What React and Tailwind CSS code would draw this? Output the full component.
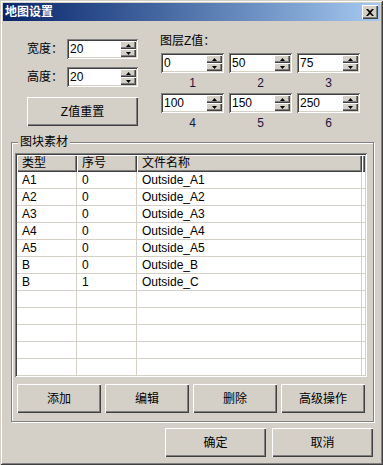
import React from 'react';

const sunken = 'shadow-[inset_1px_1px_0_#808080,inset_-1px_-1px_0_#ffffff,inset_2px_2px_0_#404040,inset_-2px_-2px_0_#d4d0c8]';
const raised = 'shadow-[inset_1px_1px_0_#ffffff,inset_-1px_-1px_0_#404040,inset_-2px_-2px_0_#808080]';
const font = "font-['Liberation_Sans','Noto_Sans_CJK_SC',sans-serif]";

const rows = [
    ['A1', '0', 'Outside_A1'],
    ['A2', '0', 'Outside_A2'],
    ['A3', '0', 'Outside_A3'],
    ['A4', '0', 'Outside_A4'],
    ['A5', '0', 'Outside_A5'],
    ['B', '0', 'Outside_B'],
    ['B', '1', 'Outside_C'],
    ['', '', ''],
    ['', '', ''],
    ['', '', ''],
    ['', '', ''],
    ['', '', ''],
    ['', '', ''],
];

const SpinBtn = ({ up }) => (
    <div className={`h-[8px] bg-[#d4d0c8] flex items-center justify-center ${raised}`}>
        <svg width="5" height="3" viewBox="0 0 5 3">
            {up ? <polygon points="0,3 5,3 2.5,0" fill="#000" /> : <polygon points="0,0 5,0 2.5,3" fill="#000" />}
        </svg>
    </div>
);

const Spin = ({ value, w }) => (
    <div className={`flex items-center bg-white h-[20px] p-[2px] ${sunken} ${w}`}>
        <span className="flex-1 pl-[1px] leading-[16px] text-black">{value}</span>
        <div className="flex flex-col w-[16px] h-[16px]">
            <SpinBtn up />
            <SpinBtn />
        </div>
    </div>
);

const Button = ({ children, w }) => (
    <button className={`h-[29px] bg-[#d4d0c8] text-black leading-none ${raised} ${w}`}>{children}</button>
);

const App = () => {
    return (
        <div className={`w-[383px] h-[465px] bg-[#d4d0c8] p-[3px] text-[12px] text-black ${font} shadow-[inset_1px_1px_0_#d4d0c8,inset_-1px_-1px_0_#404040,inset_2px_2px_0_#ffffff,inset_-2px_-2px_0_#808080]`}>
            {/* title bar */}
            <div className="h-[18px] flex items-center justify-between pl-[2px] pr-[2px] bg-gradient-to-r from-[#0a246a] to-[#a6caf0]">
                <span className="text-white font-bold text-[12px] leading-[18px]">地图设置</span>
                <div className={`w-[16px] h-[14px] bg-[#d4d0c8] flex items-center justify-center ${raised}`}>
                    <svg width="8" height="7" viewBox="0 0 8 7">
                        <path d="M0,0 L2,0 L4,2 L6,0 L8,0 L5,3.5 L8,7 L6,7 L4,5 L2,7 L0,7 L3,3.5 Z" fill="#000" />
                    </svg>
                </div>
            </div>

            {/* top settings */}
            <div className="flex pl-[24px]">
                <div className="mt-[18px]">
                    <div className="flex items-center h-[20px]">
                        <span className="w-[40px]">宽度：</span>
                        <Spin value="20" w="w-[71px]" />
                    </div>
                    <div className="flex items-center h-[20px] mt-[8px]">
                        <span className="w-[40px]">高度：</span>
                        <Spin value="20" w="w-[71px]" />
                    </div>
                    <Button w="w-[111px] h-[25px] mt-[10px]">Z值重置</Button>
                </div>
                <div className="ml-[22px] mt-[13px]">
                    <div className="h-[14px] leading-[14px]">图层Z值：</div>
                    <div className="grid grid-cols-3 gap-x-[5px] mt-[5px] pl-[1px]">
                        <Spin value="0" w="w-[63px]" />
                        <Spin value="50" w="w-[63px]" />
                        <Spin value="75" w="w-[63px]" />
                        <div className="h-[20px] leading-[20px] text-center text-[#1c1440]">1</div>
                        <div className="h-[20px] leading-[20px] text-center text-[#1c1440]">2</div>
                        <div className="h-[20px] leading-[20px] text-center text-[#1c1440]">3</div>
                        <Spin value="100" w="w-[63px]" />
                        <Spin value="150" w="w-[63px]" />
                        <Spin value="250" w="w-[63px]" />
                        <div className="h-[20px] leading-[20px] text-center text-[#1c1440]">4</div>
                        <div className="h-[20px] leading-[20px] text-center text-[#1c1440]">5</div>
                        <div className="h-[20px] leading-[20px] text-center text-[#1c1440]">6</div>
                    </div>
                </div>
            </div>

            {/* group box */}
            <div className="relative mt-[9px] ml-[8px] w-[363px] h-[280px] border border-[#808080] shadow-[inset_1px_1px_0_#ffffff,1px_1px_0_#ffffff] pl-[3px] pt-[10px]">
                <span className="absolute -top-[8px] left-[6px] px-[2px] bg-[#d4d0c8] leading-[14px]">图块素材</span>

                <div className={`w-[352px] h-[224px] bg-white p-[2px] ${sunken}`}>
                    <div className="h-full overflow-hidden">
                        <div className="flex h-[17px]">
                            <div className={`w-[60px] pl-[5px] leading-[17px] bg-[#d4d0c8] ${raised}`}>类型</div>
                            <div className={`w-[60px] pl-[5px] leading-[17px] bg-[#d4d0c8] ${raised}`}>序号</div>
                            <div className={`w-[225px] pl-[5px] leading-[17px] bg-[#d4d0c8] ${raised}`}>文件名称</div>
                            <div className={`flex-1 bg-[#d4d0c8] ${raised}`} />
                        </div>
                        {rows.map((r, i) => (
                            <div key={i} className="flex h-[17px]">
                                <div className="w-[60px] pl-[5px] leading-[16px] border-r border-b border-[#d4d0c8]">{r[0]}</div>
                                <div className="w-[60px] pl-[5px] leading-[16px] border-r border-b border-[#d4d0c8]">{r[1]}</div>
                                <div className="w-[225px] pl-[5px] leading-[16px] border-r border-b border-[#d4d0c8]">{r[2]}</div>
                                <div className="flex-1 border-b border-[#d4d0c8]" />
                            </div>
                        ))}
                    </div>
                </div>

                <div className="flex gap-[4px] mt-[7px] pl-[2px]">
                    <Button w="w-[84px]">添加</Button>
                    <Button w="w-[84px]">编辑</Button>
                    <Button w="w-[84px]">删除</Button>
                    <Button w="w-[84px]">高级操作</Button>
                </div>
            </div>

            {/* dialog buttons */}
            <div className="flex justify-end gap-[6px] mt-[6px] pr-[7px]">
                <Button w="w-[101px]">确定</Button>
                <Button w="w-[101px]">取消</Button>
            </div>
        </div>
    );
};

export default App;
